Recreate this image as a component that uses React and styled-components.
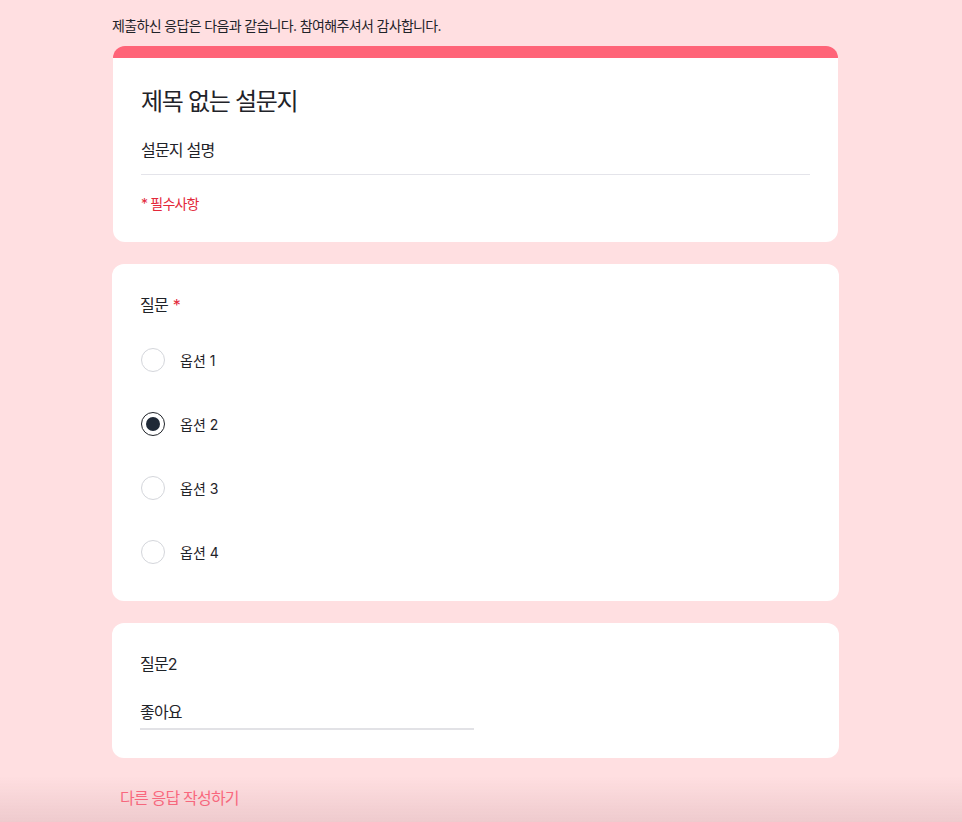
import React from 'react'
import styled, { createGlobalStyle } from 'styled-components'

const Global = createGlobalStyle`
  html, body {
    margin: 0;
    padding: 0;
    background: #ffdfe1;
    font-family: "Inter", "Noto Sans CJK KR", sans-serif;
    color: #1f2329;
  }
`;

const Page = styled.div`
  padding: 16px 0 0 112px;
  box-sizing: border-box;
`;

const Column = styled.div`
  width: 727px;
  display: flex;
  flex-direction: column;
  gap: 22px;
`;

const Notice = styled.p`
  margin: 0 0 -12px;
  font-size: 14px;
  line-height: 20px;
  letter-spacing: -0.65px;
`;

const Card = styled.section`
  background: #fff;
  border-radius: 12px;
  padding: 28px;
  margin: ${p => p.$inset ? '0 1px' : '0'};
  border-top: ${p => p.$accent ? '12px solid #ff6478' : 'none'};
  display: flex;
  flex-direction: column;
  letter-spacing: -0.05em;
`;

const Title = styled.h1`
  margin: 0;
  font-size: 24px;
  line-height: 32px;
  font-weight: 400;
  letter-spacing: -1.3px;
`;

const Description = styled.div`
  margin-top: 20px;
  font-size: 16px;
  line-height: 24px;
  padding-bottom: 12px;
  border-bottom: 1px solid #e4e4ea;
`;

const Required = styled.div`
  margin-top: 19px;
  font-size: 14px;
  line-height: 20px;
  color: #e3283a;
`;

const Question = styled.div`
  font-size: 16px;
  line-height: 24px;
  margin-top: 1px;
`;

const Star = styled.span`
  color: #e3283a;
  margin-left: 5px;
`;

const Options = styled.div`
  margin-top: 23px;
  display: flex;
  flex-direction: column;
  gap: 24px;
  margin-bottom: 1px;
`;

const Option = styled.label`
  display: flex;
  align-items: center;
  gap: 15px;
  height: 40px;
  font-size: 14px;
  letter-spacing: 0;
`;

const Radio = styled.span`
  width: 24px;
  height: 24px;
  margin-left: 1px;
  box-sizing: border-box;
  border-radius: 50%;
  border: ${p => p.$checked ? '1.5px solid #1f2329' : '1px solid #d4d6db'};
  display: flex;
  align-items: center;
  justify-content: center;
  &::after {
    content: '';
    display: ${p => p.$checked ? 'block' : 'none'};
    width: 14px;
    height: 14px;
    border-radius: 50%;
    background: #1f2937;
  }
`;

const Answer = styled.div`
  margin-top: 24px;
  width: 334px;
  font-size: 16px;
  line-height: 24px;
  padding-bottom: 4px;
  border-bottom: 2px solid #e2e2e6;
`;

const AgainButton = styled.button`
  align-self: flex-start;
  margin-top: -2px;
  background: none;
  border: none;
  padding: 8px;
  font: inherit;
  font-size: 16px;
  line-height: 24px;
  letter-spacing: -0.8px;
  color: #ff6b81;
  cursor: pointer;
`;

const BottomFade = styled.div`
  position: fixed;
  left: 0;
  right: 0;
  bottom: 0;
  height: 46px;
  pointer-events: none;
  background: linear-gradient(to bottom, rgba(120, 60, 70, 0), rgba(120, 60, 70, 0.12));
`;

const options = ['옵션 1', '옵션 2', '옵션 3', '옵션 4']

export default function App() {
    const selected = 1
    return (
        <Page>
            <Global />
            <Column>
                <Notice>제출하신 응답은 다음과 같습니다. 참여해주셔서 감사합니다.</Notice>
                <Card $accent $inset>
                    <Title>제목 없는 설문지</Title>
                    <Description>설문지 설명</Description>
                    <Required>* 필수사항</Required>
                </Card>
                <Card>
                    <Question>질문<Star>*</Star></Question>
                    <Options>
                        {options.map((o, i) => (
                            <Option key={o}>
                                <Radio $checked={i === selected} />
                                {o}
                            </Option>
                        ))}
                    </Options>
                </Card>
                <Card>
                    <Question>질문2</Question>
                    <Answer>좋아요</Answer>
                </Card>
                <AgainButton>다른 응답 작성하기</AgainButton>
            </Column>
            <BottomFade />
        </Page>
    )
}
